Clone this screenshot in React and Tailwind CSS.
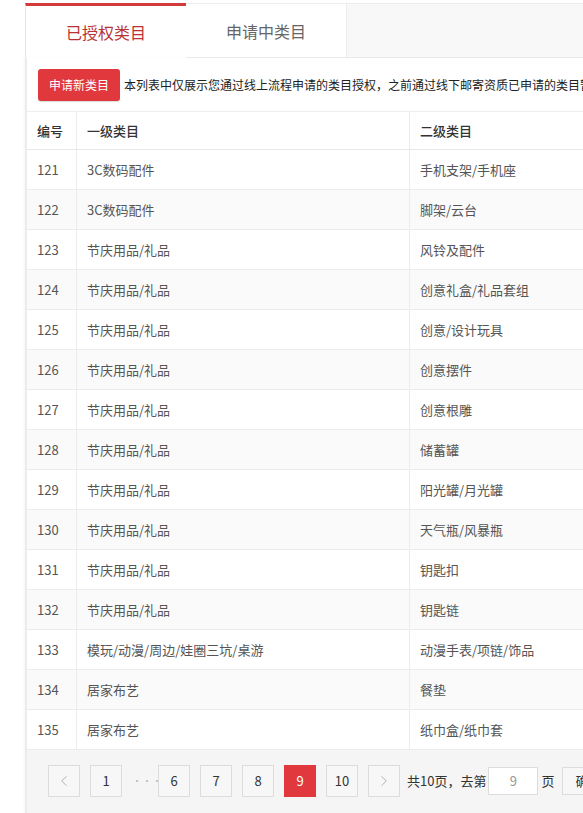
import { ChevronLeft, ChevronRight } from "lucide-react";

const rows = [
  [121, "3C数码配件", "手机支架/手机座"],
  [122, "3C数码配件", "脚架/云台"],
  [123, "节庆用品/礼品", "风铃及配件"],
  [124, "节庆用品/礼品", "创意礼盒/礼品套组"],
  [125, "节庆用品/礼品", "创意/设计玩具"],
  [126, "节庆用品/礼品", "创意摆件"],
  [127, "节庆用品/礼品", "创意根雕"],
  [128, "节庆用品/礼品", "储蓄罐"],
  [129, "节庆用品/礼品", "阳光罐/月光罐"],
  [130, "节庆用品/礼品", "天气瓶/风暴瓶"],
  [131, "节庆用品/礼品", "钥匙扣"],
  [132, "节庆用品/礼品", "钥匙链"],
  [133, "模玩/动漫/周边/娃圈三坑/桌游", "动漫手表/项链/饰品"],
  [134, "居家布艺", "餐垫"],
  [135, "居家布艺", "纸巾盒/纸巾套"],
];

function PageBtn({ children, active }) {
  return (
    <div
      className={
        active
          ? "w-[32px] h-[32px] flex items-center justify-center bg-[#e0383d] border border-[#e0383d] text-white text-[13px]"
          : "w-[32px] h-[32px] flex items-center justify-center bg-[#f7f7f7] border border-[#dcdcdc] text-[#333] text-[13px]"
      }
    >
      {children}
    </div>
  );
}

export default function App() {
  return (
    <div
      className="w-[583px] h-[813px] overflow-hidden bg-white pl-[25px]"
      style={{ fontFamily: '"Microsoft YaHei", "Noto Sans CJK SC", "Noto Sans", sans-serif' }}
    >
      <div className="w-[820px] h-full flex flex-col">
        {/* tabs */}
        <div className="flex mt-[3px] h-[55px]">
          <div className="w-[161px] h-full border-t-[3px] border-[#d33a3a] border-l border-l-[#e5e5e5] bg-white flex items-center justify-center text-[16px] text-[#b83232]">
            已授权类目
          </div>
          <div className="w-[161px] h-full border border-[#ececec] border-l-0 bg-white flex items-center justify-center text-[16px] text-[#666]">
            申请中类目
          </div>
          <div className="flex-1 h-full border-t border-b border-[#ececec] bg-[#f8f8f8]" />
        </div>

        {/* panel */}
        <div className="flex-1 flex flex-col border-l-[2px] border-[#ececec] shadow-[-1px_0_2px_rgba(0,0,0,0.04)]">
          <div className="h-[54px] flex items-center pl-[11px] border-b border-[#eeeeee]">
            <div className="h-[32px] px-[11px] flex items-center bg-[#e0383d] text-white text-[12px] rounded-[3px] shadow-[0_1px_1px_rgba(0,0,0,0.15)]">
              申请新类目
            </div>
            <div className="ml-[4px] text-[12px] text-[#222] whitespace-nowrap">
              本列表中仅展示您通过线上流程申请的类目授权，之前通过线下邮寄资质已申请的类目暂不展示
            </div>
          </div>

          <div className="flex h-[38px] border-b border-[#e8e8e8] text-[13px] text-[#333] font-medium bg-white">
            <div className="w-[50px] flex items-center pl-[10px] border-r border-[#ececec]">编号</div>
            <div className="w-[333px] flex items-center pl-[10px] border-r border-[#ececec]">一级类目</div>
            <div className="flex-1 flex items-center pl-[10px]">二级类目</div>
          </div>

          {rows.map((r, i) => (
            <div
              key={r[0]}
              className={
                "flex h-[40px] border-b border-[#ececec] text-[13px] text-[#555] " +
                (i % 2 === 1 ? "bg-[#fafafa]" : "bg-white")
              }
            >
              <div className="w-[50px] flex items-center pl-[10px] border-r border-[#ececec]">{r[0]}</div>
              <div className="w-[333px] flex items-center pl-[10px] border-r border-[#ececec]">{r[1]}</div>
              <div className="flex-1 flex items-center pl-[10px]">{r[2]}</div>
            </div>
          ))}

          {/* pagination */}
          <div className="flex-1 bg-[#f5f5f5] pt-[15px] pl-[21px]">
            <div className="flex items-center gap-[10px]">
              <PageBtn>
                <ChevronLeft size={18} strokeWidth={1} color="#999" />
              </PageBtn>
              <PageBtn>1</PageBtn>
              <div className="w-[16px] text-center text-[#bbb] text-[10px] leading-none">···</div>
              <PageBtn>6</PageBtn>
              <PageBtn>7</PageBtn>
              <PageBtn>8</PageBtn>
              <PageBtn active>9</PageBtn>
              <PageBtn>10</PageBtn>
              <PageBtn>
                <ChevronRight size={18} strokeWidth={1} color="#999" />
              </PageBtn>
              <div className="flex items-center text-[13px] text-[#333] -ml-[3px]">
                <span>共10页，去第</span>
                <div className="ml-[2px] w-[50px] h-[28px] bg-white border border-[#dcdcdc] flex items-center justify-center text-[#999]">
                  9
                </div>
                <span className="ml-[3px]">页</span>
                <div className="ml-[8px] h-[28px] px-[12px] bg-[#f7f7f7] border border-[#dcdcdc] flex items-center">
                  确定
                </div>
              </div>
            </div>
          </div>
        </div>
      </div>
    </div>
  );
}
